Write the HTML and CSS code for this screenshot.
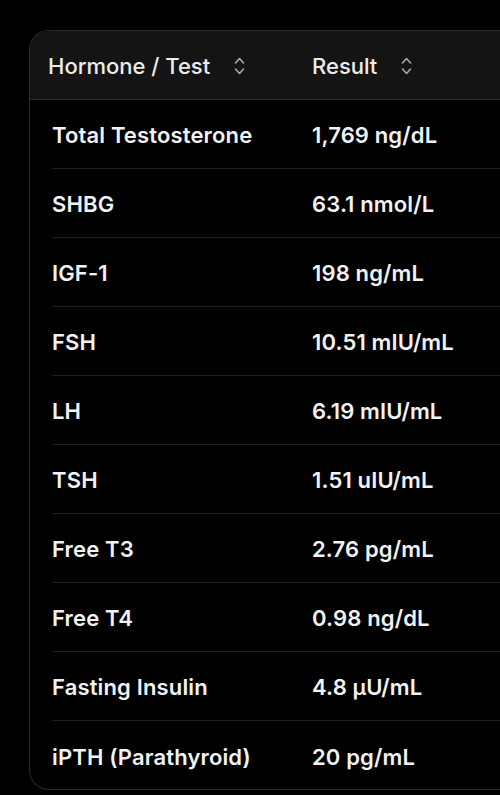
FILE: index.html
```html
<!DOCTYPE html>
<html>
<head>
<meta charset="utf-8">
<link rel="stylesheet" href="styles.css">
</head>
<body>
<div class="card">
  <div class="head">
    <div class="hcell c1">Hormone / Test <svg class="sort" viewBox="0 0 11 20" width="11" height="20"><path d="M1.5 7 L5.5 2.5 L9.5 7 M1.5 13 L5.5 17.5 L9.5 13" fill="none" stroke="#a8a8a8" stroke-width="1.6" stroke-linecap="round" stroke-linejoin="round"/></svg></div>
    <div class="hcell c2">Result <svg class="sort" viewBox="0 0 11 20" width="11" height="20"><path d="M1.5 7 L5.5 2.5 L9.5 7 M1.5 13 L5.5 17.5 L9.5 13" fill="none" stroke="#a8a8a8" stroke-width="1.6" stroke-linecap="round" stroke-linejoin="round"/></svg></div>
  </div>
  <div class="row"><div class="c1">Total Testosterone</div><div class="c2">1,769 ng/dL</div></div>
  <div class="row"><div class="c1">SHBG</div><div class="c2">63.1 nmol/L</div></div>
  <div class="row"><div class="c1">IGF-1</div><div class="c2">198 ng/mL</div></div>
  <div class="row"><div class="c1">FSH</div><div class="c2">10.51 mIU/mL</div></div>
  <div class="row"><div class="c1">LH</div><div class="c2">6.19 mIU/mL</div></div>
  <div class="row"><div class="c1">TSH</div><div class="c2">1.51 uIU/mL</div></div>
  <div class="row"><div class="c1">Free T3</div><div class="c2">2.76 pg/mL</div></div>
  <div class="row"><div class="c1">Free T4</div><div class="c2">0.98 ng/dL</div></div>
  <div class="row"><div class="c1">Fasting Insulin</div><div class="c2">4.8 µU/mL</div></div>
  <div class="row last"><div class="c1">iPTH (Parathyroid)</div><div class="c2">20 pg/mL</div></div>
</div>
</body>
</html>
```
FILE: styles.css
```css
html, body {
  margin: 0;
  padding: 0;
  background: #000;
  overflow: hidden;
}
body {
  width: 500px;
  height: 795px;
  font-family: Inter, "Noto Sans", sans-serif;
  color: #f2f2f2;
}
.card {
  margin: 30px 0 0 29px;
  width: 471px;
  height: 760px;
  border: 1px solid #2a2a2a;
  border-right: none;
  border-radius: 20px 0 0 20px;
  background: #000;
  overflow: hidden;
  box-sizing: border-box;
}
.head {
  display: flex;
  align-items: center;
  height: 69px;
  background: #141414;
  border-bottom: 1px solid #2c2c2c;
  box-sizing: border-box;
  padding-left: 18px;
  padding-top: 2px;
}
.hcell {
  display: flex;
  align-items: center;
  font-size: 22px;
  font-weight: 500;
  color: #ececec;
  white-space: nowrap;
}
.head .c1 {
  width: 264px;
}
.sort {
  margin-left: 24px;
}
.row {
  display: flex;
  align-items: center;
  height: 69px;
  margin-left: 22px;
  border-bottom: 1px solid #1e1e1e;
  box-sizing: border-box;
  font-size: 22px;
  font-weight: 600;
  letter-spacing: 0.15px;
  white-space: nowrap;
  padding-top: 2px;
}
.row.last {
  border-bottom: none;
}
.row .c1 {
  width: 260px;
}
```
